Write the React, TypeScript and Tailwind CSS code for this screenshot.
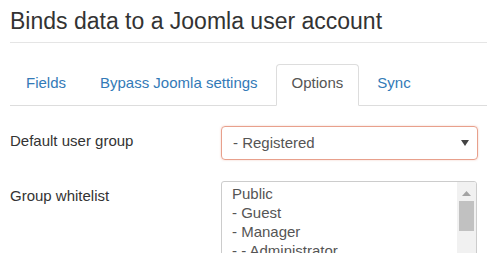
const TABS = ['Fields', 'Bypass Joomla settings', 'Options', 'Sync']
const ACTIVE_TAB = 'Options'

const GROUPS = [
  'Public',
  '- Guest',
  '- Manager',
  '- - Administrator',
  '- Registered',
  '- - Author',
  '- - - Editor',
]

function Tabs() {
  return (
    <ul className="mt-[21px] flex border-b border-[#ddd]">
      {TABS.map((tab) => {
        const active = tab === ACTIVE_TAB
        return (
          <li key={tab} className="-mb-px mr-[2px]">
            <a
              href="#"
              className={`block rounded-t-[4px] border px-[15px] pt-[8px] pb-[12px] leading-[20px] ${
                active
                  ? 'border-[#ddd] border-b-white bg-white text-[#555]'
                  : 'border-transparent text-[#337ab7]'
              }`}
            >
              {tab}
            </a>
          </li>
        )
      })}
    </ul>
  )
}

function FakeSelect({ value }: { value: string }) {
  return (
    <div className="flex h-[34px] w-[257px] items-center justify-between rounded-[4px] border border-[#e8a08c] pl-[11px] pr-[8px] text-[#555] shadow-[0_0_2px_rgba(232,150,125,0.5)]">
      <span>{value}</span>
      <svg width="8" height="6" viewBox="0 0 8 6" aria-hidden>
        <polygon points="0,0 8,0 4,6" fill="#444" />
      </svg>
    </div>
  )
}

function ListBox({ items }: { items: string[] }) {
  return (
    <div className="flex h-[110px] w-[256px] overflow-hidden rounded-t-[3px] border border-[#ccc]">
      <ul className="flex-1 pl-[10px] pt-[2px] leading-[19px] text-[#555]">
        {items.map((it) => (
          <li key={it}>{it}</li>
        ))}
      </ul>
      {/* scrollbar */}
      <div className="flex w-[19px] flex-col items-center bg-[#f1f1f1]">
        <svg width="9" height="5" viewBox="0 0 9 5" className="mt-[9px]" aria-hidden>
          <polygon points="4.5,0 9,5 0,5" fill="#a3a3a3" />
        </svg>
        <div className="mt-[5px] h-[30px] w-[15px] bg-[#c1c1c1]" />
      </div>
    </div>
  )
}

export default function App() {
  return (
    <div className="min-h-[253px] bg-white pl-[10px] font-['Liberation_Sans',Arial,sans-serif] text-[15px] text-[#333]">
      <h3 className="border-b border-[#e5e5e5] pt-[8px] pb-[8px] text-[23px] leading-[26px]">
        Binds data to a Joomla user account
      </h3>

      <Tabs />

      <div className="mt-[20px] flex">
        <label className="w-[211px] pt-[5px] leading-[20px]">Default user group</label>
        <FakeSelect value="- Registered" />
      </div>

      <div className="mt-[21px] flex">
        <label className="w-[211px] pt-[5px] leading-[20px]">Group whitelist</label>
        <ListBox items={GROUPS} />
      </div>
    </div>
  )
}
